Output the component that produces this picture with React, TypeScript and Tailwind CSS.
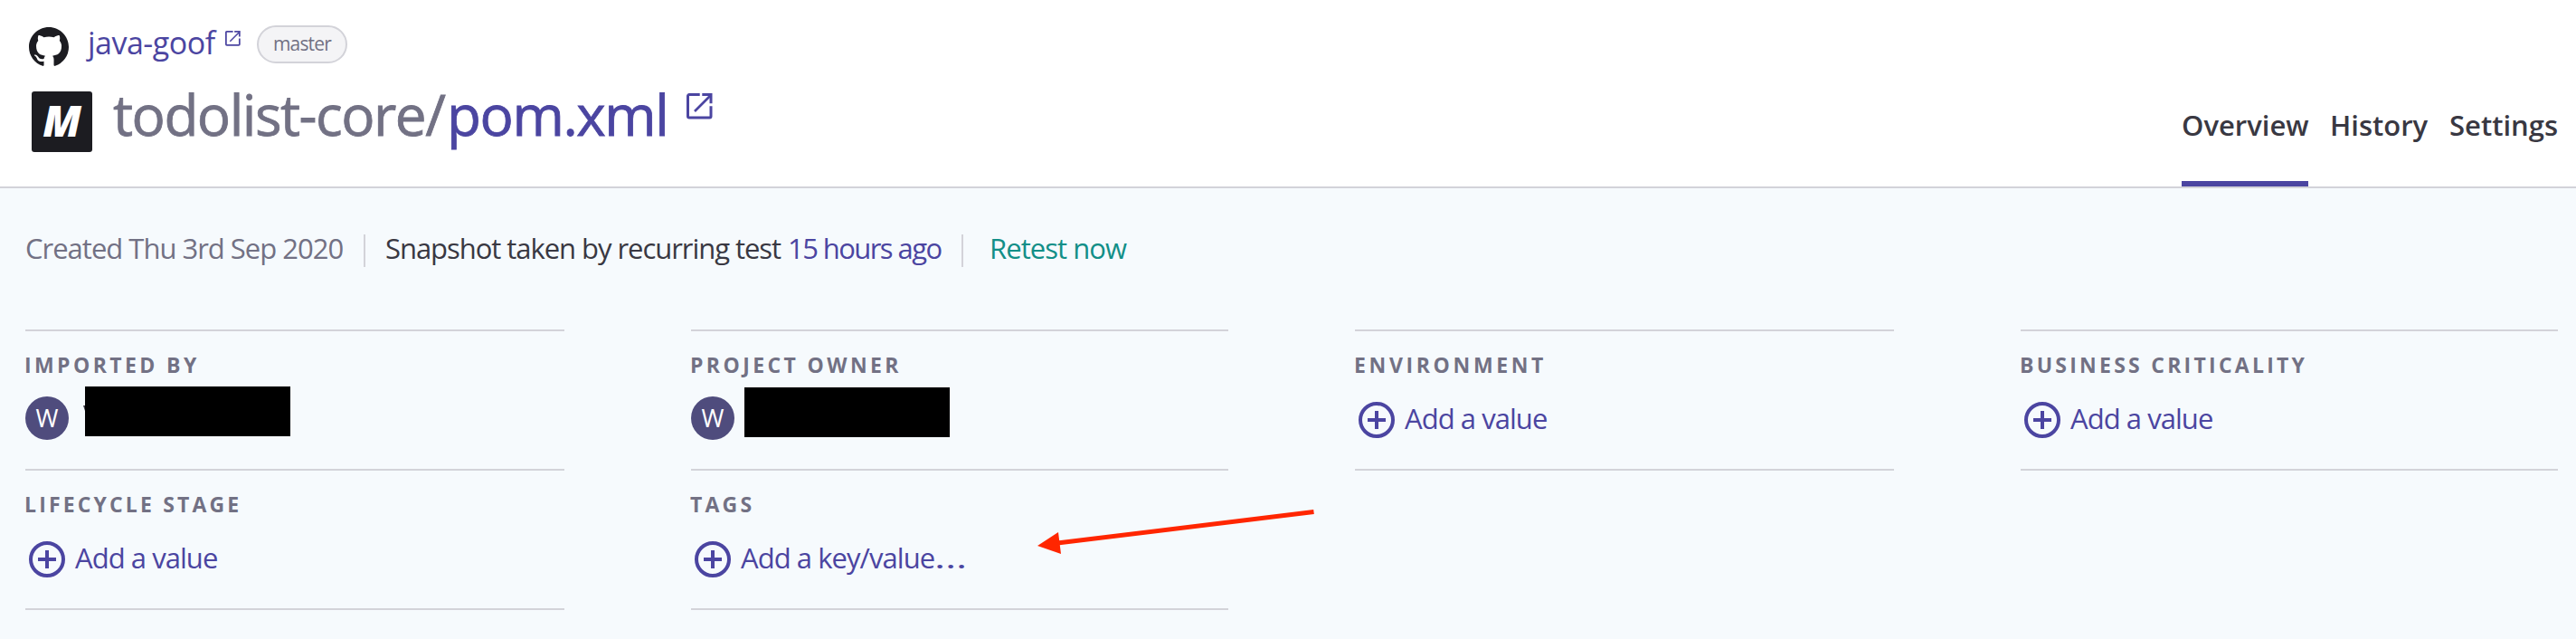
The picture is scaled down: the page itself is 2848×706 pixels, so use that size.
import type { ReactNode } from "react";

function GithubMark() {
  return (
    <svg viewBox="0 0 16 16" className="mt-[2px] size-[44px] shrink-0 fill-[#1c1c21]">
      <path
        fillRule="evenodd"
        d="M8 0C3.58 0 0 3.58 0 8c0 3.54 2.29 6.53 5.47 7.59.4.07.55-.17.55-.38 0-.19-.01-.82-.01-1.49-2.01.37-2.53-.49-2.69-.94-.09-.23-.48-.94-.82-1.13-.28-.15-.68-.52-.01-.53.63-.01 1.08.58 1.23.82.72 1.21 1.87.87 2.33.66.07-.52.28-.87.51-1.07-1.78-.2-3.64-.89-3.64-3.95 0-.87.31-1.59.82-2.15-.08-.2-.36-1.02.08-2.12 0 0 .67-.21 2.2.82.64-.18 1.32-.27 2-.27s1.36.09 2 .27c1.53-1.04 2.2-.82 2.2-.82.44 1.1.16 1.92.08 2.12.51.56.82 1.27.82 2.15 0 3.07-1.87 3.75-3.65 3.95.29.25.54.73.54 1.48 0 1.07-.01 1.93-.01 2.2 0 .21.15.46.55.38A8.01 8.01 0 0 0 16 8c0-4.42-3.58-8-8-8z"
      />
    </svg>
  );
}

function ExternalLink({ className }: { className: string }) {
  return (
    <svg viewBox="0 0 29 29" className={className} fill="none" stroke="#4b45a1" strokeWidth="3">
      <path d="M14.7 1.5H3A1.5 1.5 0 0 0 1.5 3v22.5A1.5 1.5 0 0 0 3 27h22.5a1.5 1.5 0 0 0 1.5-1.5V14.3" />
      <path d="M17.3 1.5H27v9.8" />
      <path d="M9 20 27 2" strokeWidth="2.6" />
    </svg>
  );
}

function AddValue({ children }: { children: ReactNode }) {
  return (
    <div className="mt-[22px] flex h-12">
      <svg viewBox="0 0 48 48" className="size-12 shrink-0" fill="none" stroke="#4b45a1" strokeWidth="4">
        <circle cx="24" cy="24" r="18" />
        <path d="M24 14v20M14 24h20" />
      </svg>
      <span className="ml-[7px] text-[31px] leading-[44px] tracking-[-0.95px] text-[#4b45a1]">{children}</span>
    </div>
  );
}

function Avatar() {
  return (
    <div className="flex size-12 shrink-0 justify-center rounded-full bg-[#4f4c7d] text-[27px] leading-[48px] text-white">
      W
    </div>
  );
}

function Cell({ label, tracking, children }: { label: string; tracking: string; children: ReactNode }) {
  return (
    <div className="-mb-[2px] h-[156px] border-y-2 border-[#d3d3d9] pt-[22px]">
      <div className={`-ml-px text-[23px] leading-[30px] font-bold whitespace-nowrap text-[#727184] ${tracking}`}>
        {label}
      </div>
      {children}
    </div>
  );
}

export default function App() {
  return (
    <div className="relative h-[706px] w-[2848px] overflow-hidden bg-[#f6fafd] font-['Open_Sans',sans-serif] whitespace-nowrap">
      <header className="flex h-[208px] justify-between border-b-2 border-[#d3d3d9] bg-white pr-5 pl-8">
        <div>
          <div className="mt-7 flex h-11 items-start">
            <GithubMark />
            <a className="-mt-px ml-[21px] w-[143px] text-[34px] leading-[40px] tracking-[-0.5px] text-[#4b45a1]">java-goof</a>
            <ExternalLink className="mt-[6px] ml-[9px] size-[17px]" />
            <span className="ml-[18px] flex h-[42px] w-[100px] justify-center rounded-full border-2 border-[#d3d3d9] bg-[#f4f4f6] text-[21px] leading-[36px] tracking-[-0.8px] text-[#727184]">
              master
            </span>
          </div>
          <div className="mt-[19px] flex items-start">
            <div className="mt-[10px] ml-[3px] flex size-[67px] justify-center rounded-[3px] bg-[#1c1c21] text-[47px] leading-[64px] font-extrabold text-white italic">
              M
            </div>
            <h1 className="ml-[23px] flex text-[62px] leading-[70px] [-webkit-text-stroke:0.8px]">
              <span className="w-[369px] tracking-[-1.5px] text-[#727184]">todolist-core/</span>
              <a className="w-[247px] tracking-[-1.4px] text-[#4b45a1]">pom.xml</a>
            </h1>
            <ExternalLink className="mt-[12px] ml-[18px] size-[29px]" />
          </div>
        </div>
        <nav className="flex gap-6 text-[31px] leading-[40px] font-semibold text-[#393842]">
          <a className="w-[140px] border-b-[6px] border-[#4b45a1] pt-[118px]">Overview</a>
          <a className="w-[108px] pt-[118px]">History</a>
          <a className="w-[120px] pt-[118px]">Settings</a>
        </nav>
      </header>

      <main className="px-7 pr-5 pt-[51px]">
        <div className="flex h-9 items-start text-[31px] leading-[30px]">
          <span className="w-[374px] tracking-[-1px] text-[#727184]">Created Thu 3rd Sep 2020</span>
          <i className="h-9 w-[2px] bg-[#d3d3d9]" />
          <span className="ml-[22px] w-[445px] tracking-[-1.05px] text-[#393842]">Snapshot taken by recurring test</span>
          <a className="w-[192px] tracking-[-1.57px] text-[#4b45a1]">15 hours ago</a>
          <i className="h-9 w-[2px] bg-[#d3d3d9]" />
          <a className="ml-[29px] tracking-[-0.95px] text-[#128f88]">Retest now</a>
        </div>

        <section className="mt-[69px] grid grid-cols-[596px_594px_596px_594px] gap-x-[140px]">
          <Cell label="IMPORTED BY" tracking="tracking-[3.4px]">
            <div className="mt-5 flex items-start">
              <Avatar />
              <svg viewBox="0 0 2 6" className="mt-[10px] ml-4 h-[6px] w-[2px] fill-[#393842]">
                <path d="M0 0h2v6z" />
              </svg>
              <div className="-mt-[11px] h-[55px] w-[227px] bg-black" />
            </div>
          </Cell>
          <Cell label="PROJECT OWNER" tracking="tracking-[3.4px]">
            <div className="mt-5 flex items-start">
              <Avatar />
              <div className="-mt-[10px] ml-[11px] h-[55px] w-[227px] bg-black" />
            </div>
          </Cell>
          <Cell label="ENVIRONMENT" tracking="tracking-[3.65px]">
            <AddValue>Add a value</AddValue>
          </Cell>
          <Cell label="BUSINESS CRITICALITY" tracking="tracking-[3.25px]">
            <AddValue>Add a value</AddValue>
          </Cell>
          <Cell label="LIFECYCLE STAGE" tracking="tracking-[3.15px]">
            <AddValue>Add a value</AddValue>
          </Cell>
          <Cell label="TAGS" tracking="tracking-[3.2px]">
            <AddValue>
              Add a key/value<span className="inline-block origin-left scale-x-[1.5]">…</span>
            </AddValue>
          </Cell>
        </section>
      </main>

      <svg viewBox="0 0 306 50" className="absolute top-[563px] left-[1147px] h-[50px] w-[306px]">
        <path d="M0 40 23 25 26 49Z" fill="#ff2600" />
        <path d="M22 37 305.5 2.5" stroke="#ff2600" strokeWidth="4.8" />
      </svg>
    </div>
  );
}
